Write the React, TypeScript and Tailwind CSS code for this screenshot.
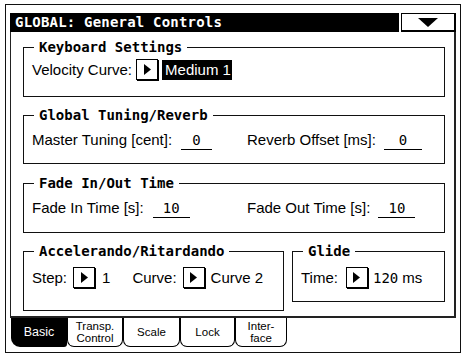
import React from 'react';

const sans = "font-['Liberation_Sans',Arial,sans-serif]";
const mono = "font-['DejaVu_Sans_Mono',monospace]";

function ArrowBtn() {
  return (
    <span className="inline-flex h-[21px] w-[22px] shrink-0 items-center justify-center border border-black bg-white shadow-[1px_1px_0_#000]">
      <svg width="7" height="11" viewBox="0 0 7 11">
        <path d="M0 0 L7 5.5 L0 11 Z" fill="#000" />
      </svg>
    </span>
  );
}

function Field({ value, className }: { value: string; className: string }) {
  return (
    <span className={`inline-block h-[19px] border-b border-black text-center text-[14px] leading-[18px] slashed-zero ${mono} ${className}`}>
      {value}
    </span>
  );
}

function Section({
  title,
  className,
  children,
}: {
  title: string;
  className: string;
  children: React.ReactNode;
}) {
  return (
    <fieldset className={`border border-[#111] px-[8px] ${className}`}>
      <legend className={`ml-[2px] px-[5px] text-[14px] font-bold leading-[16px] ${mono}`}>{title}</legend>
      {children}
    </fieldset>
  );
}

const tabs = [
  { label: ['Basic'], w: 'w-[56px]', active: true },
  { label: ['Transp.', 'Control'], w: 'w-[56px]' },
  { label: ['Scale'], w: 'w-[57px]' },
  { label: ['Lock'], w: 'w-[55px]' },
  { label: ['Inter-', 'face'], w: 'w-[52px]' },
];

export default function App() {
  return (
    <div className={`h-[356px] w-[464px] overflow-hidden bg-white pl-[5px] pt-[4px] text-black ${sans}`}>
      <div className="flex h-[349px] w-[456px] flex-col border border-[#111] px-[4px] pt-[8px]">
        {/* Title bar */}
        <div className="flex h-[19px]">
          <div className={`flex flex-1 items-center bg-black pl-[5px] text-[14px] font-bold tracking-[0.2px] text-white ${mono}`}>
            GLOBAL: General Controls
          </div>
          <div className="ml-[2px] flex w-[55px] items-center justify-center border border-b-2 border-r-2 border-black bg-white">
            <svg width="20" height="9" viewBox="0 0 20 9">
              <path d="M0 0 H20 L10 9 Z" fill="#000" />
            </svg>
          </div>
        </div>

        {/* Panel */}
        <div className="flex flex-col border-b-2 border-l border-r-2 border-[#222] pb-[5px] pl-[12px] pr-[9px] pt-[7px]">
          <Section title="Keyboard Settings" className="h-[58px] pt-[4px]">
            <div className="flex h-[22px] items-center text-[15px]">
              <span>Velocity Curve:</span>
              <span className="ml-[4px]">
                <ArrowBtn />
              </span>
              <span className="ml-[4px] flex h-[20px] w-[70px] items-center whitespace-nowrap bg-black px-[3px] text-white">
                Medium 1
              </span>
            </div>
          </Section>

          <Section title="Global Tuning/Reverb" className="mt-[10px] h-[57px] pt-[6px]">
            <div className="grid h-[22px] grid-cols-[215px_1fr] items-center text-[15px]">
              <div className="flex items-center">
                <span>Master Tuning [cent]:</span>
                <Field value="0" className="ml-[9px] w-[31px]" />
              </div>
              <div className="flex items-center">
                <span>Reverb Offset [ms]:</span>
                <Field value="0" className="ml-[8px] w-[38px]" />
              </div>
            </div>
          </Section>

          <Section title="Fade In/Out Time" className="mt-[11px] h-[58px] pt-[6px]">
            <div className="grid h-[22px] grid-cols-[215px_1fr] items-center text-[15px]">
              <div className="flex items-center">
                <span>Fade In Time [s]:</span>
                <Field value="10" className="ml-[9px] w-[37px]" />
              </div>
              <div className="flex items-center">
                <span>Fade Out Time [s]:</span>
                <Field value="10" className="ml-[8px] w-[37px]" />
              </div>
            </div>
          </Section>

          <div className="mt-[10px] flex items-start gap-[8px]">
            <Section title="Accelerando/Ritardando" className="h-[68px] w-[261px] pt-[8px]">
              <div className="flex h-[22px] items-center text-[15px]">
                <span>Step:</span>
                <span className="ml-[6px]">
                  <ArrowBtn />
                </span>
                <span className="ml-[7px]">1</span>
                <span className="ml-[22px]">Curve:</span>
                <span className="ml-[6px]">
                  <ArrowBtn />
                </span>
                <span className="ml-[6px]">Curve 2</span>
              </div>
            </Section>
            <Section title="Glide" className="h-[59px] flex-1 pt-[8px]">
              <div className="flex h-[22px] items-center text-[15px]">
                <span>Time:</span>
                <span className="ml-[8px]">
                  <ArrowBtn />
                </span>
                <span className={`ml-[5px] text-[14px] slashed-zero ${mono}`}>120</span>
                <span className="ml-[4px]">ms</span>
              </div>
            </Section>
          </div>
        </div>

        {/* Tabs */}
        <div className="flex pl-[1px]">
          {tabs.map((t) =>
            t.active ? (
              <div
                key={t.label.join('')}
                className={`flex h-[29px] ${t.w} items-center justify-center rounded-bl-[9px] rounded-br-[3px] bg-black text-[12.5px] leading-[13px] text-white`}
              >
                {t.label[0]}
              </div>
            ) : (
              <div
                key={t.label.join('')}
                className={`flex h-[29px] ${t.w} flex-col items-center justify-center rounded-b-[7px] border border-t-0 border-black bg-white text-[11.5px] leading-[12px]`}
              >
                {t.label.map((l) => (
                  <span key={l} className="block leading-[12px]">
                    {l}
                  </span>
                ))}
              </div>
            )
          )}
        </div>
      </div>
    </div>
  );
}
